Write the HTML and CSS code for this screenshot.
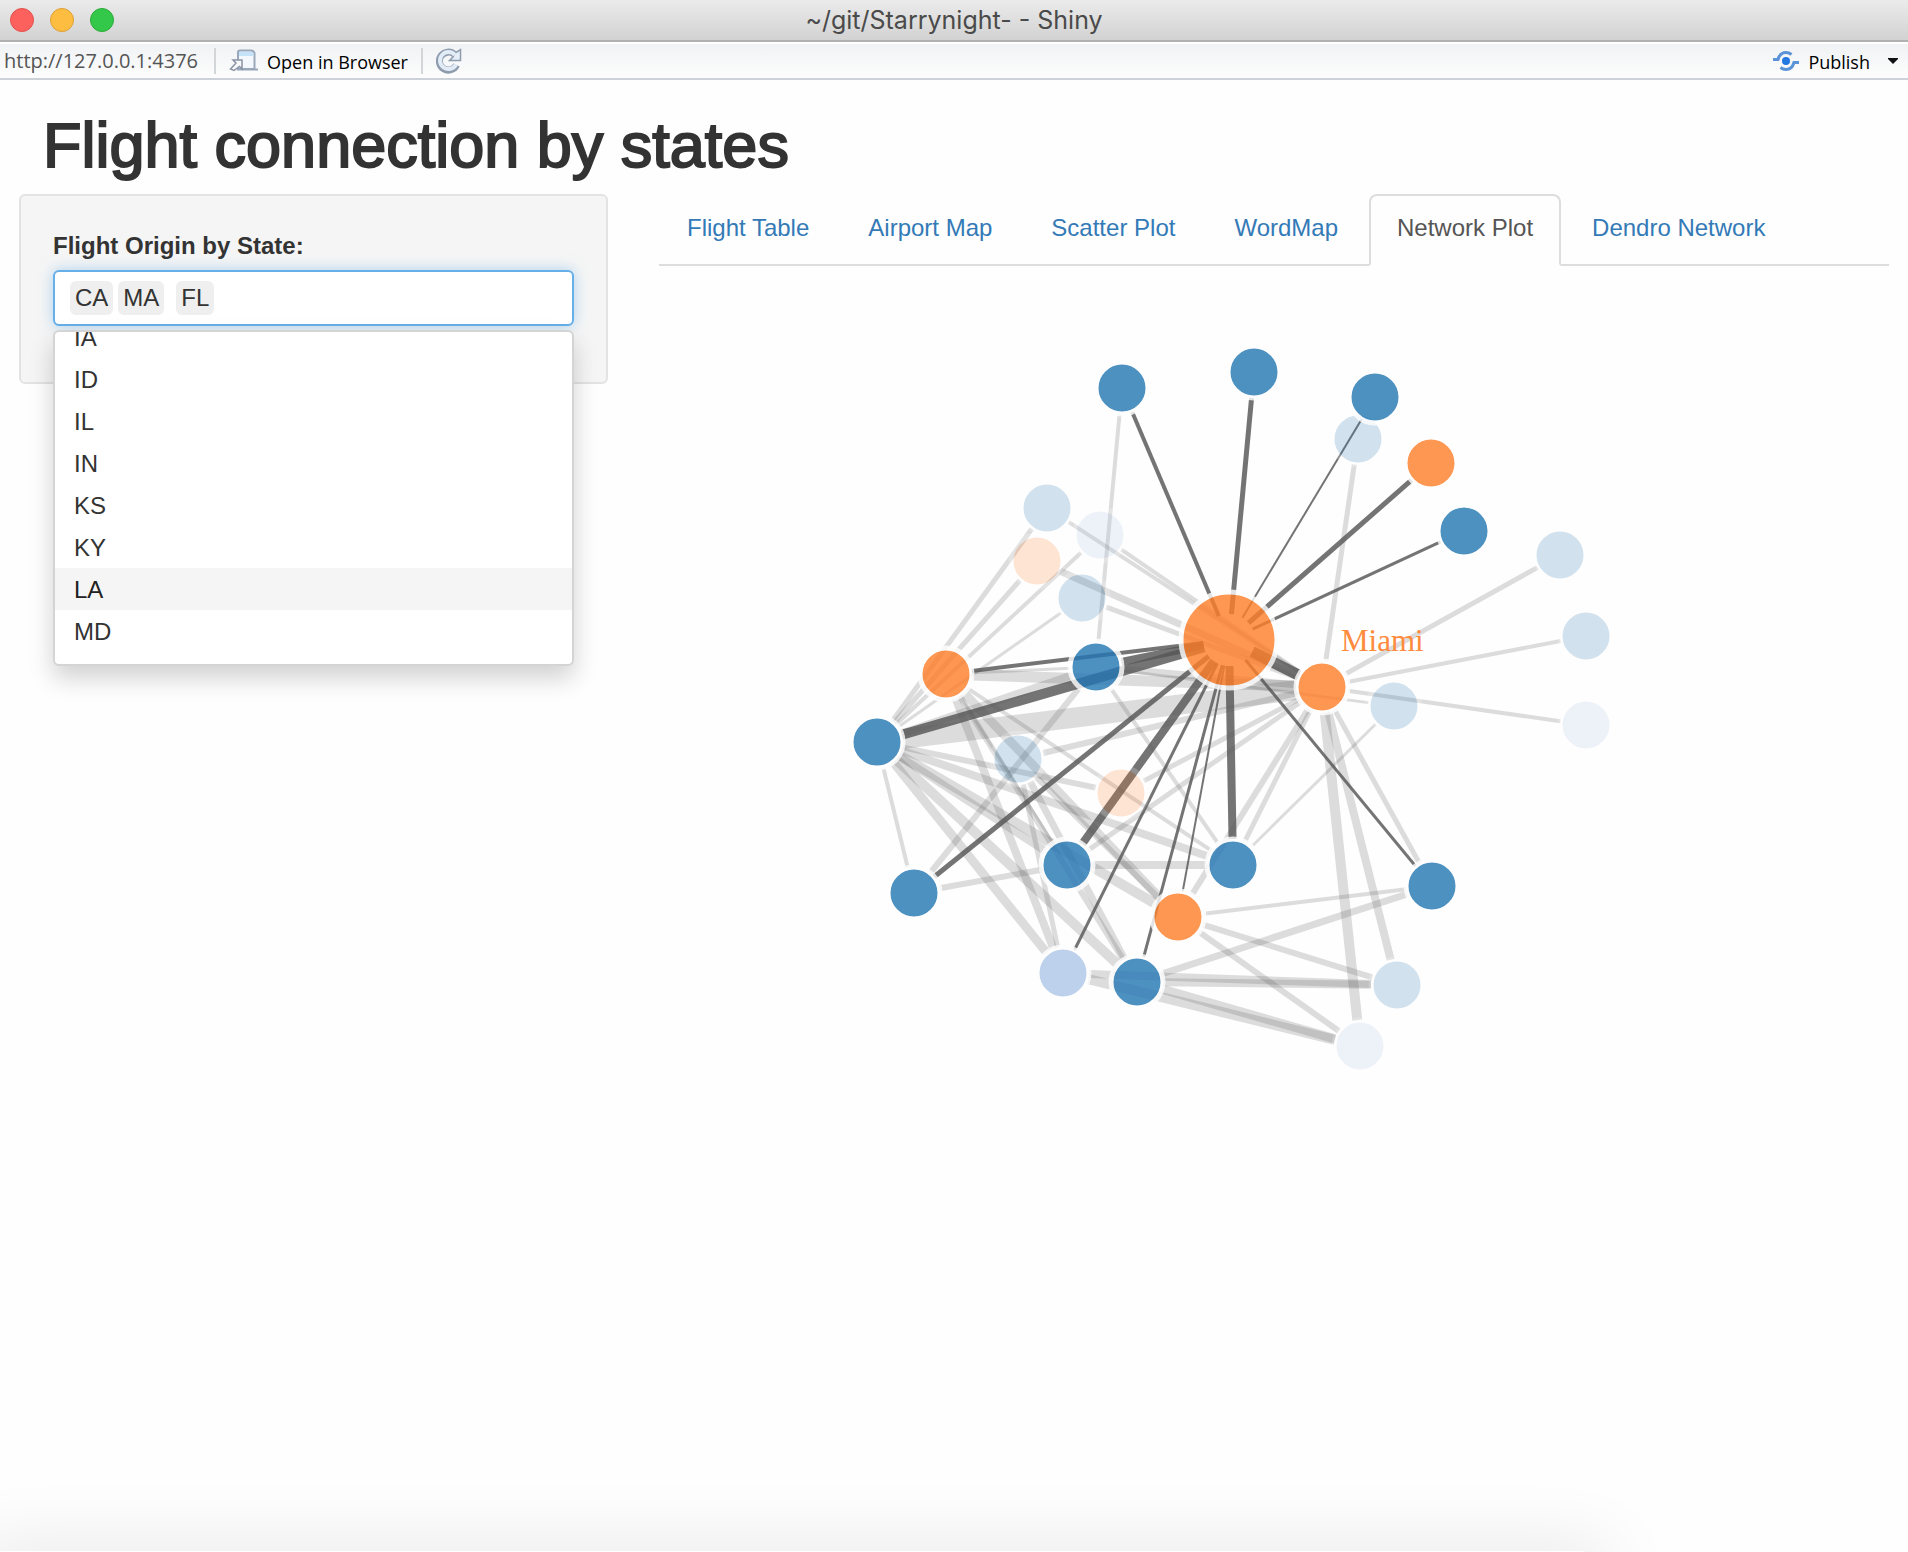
FILE: index.html
```html
<!DOCTYPE html>
<html lang="en">
<head>
<meta charset="utf-8">
<title>~/git/Starrynight- - Shiny</title>
<link rel="stylesheet" href="styles.css">
</head>
<body>
<div class="window">
  <header class="titlebar">
    <div class="lights">
      <button class="light light-close" aria-label="Close"></button>
      <button class="light light-min" aria-label="Minimize"></button>
      <button class="light light-zoom" aria-label="Zoom"></button>
    </div>
    <div class="window-title">~/git/Starrynight- - Shiny</div>
  </header>

  <nav class="toolbar" aria-label="Viewer toolbar">
    <span class="url">http://127.0.0.1:4376</span>
    <span class="divider"></span>
    <button class="tool">
      <svg class="icon-open" width="30" height="24" viewBox="0 0 30 24" aria-hidden="true">
        <path d="M9 3 Q9 1.500 11 1.500 H22 Q24.500 1.500 25.500 4 V20 H9 Z" fill="#f4f8fc" stroke="#9aa8bb" stroke-width="2"/>
        <path d="M10 3 H24 L24.500 7 H10 Z" fill="#c4e2f8"/>
        <path d="M8 20.500 H29" stroke="#9aa7b8" stroke-width="2"/>
        <path d="M1.500 20 L7 14 L4 11 H13 V20 L10.500 17.500 L5 21.500 Z" fill="#f7f8fa" stroke="#8a93a3" stroke-width="1.500"/>
      </svg>
      <span>Open in Browser</span>
    </button>
    <span class="divider"></span>
    <button class="tool" aria-label="Reload">
      <svg width="26" height="26" viewBox="0 0 26 26" aria-hidden="true">
        <path d="M20.500 17 A9 9 0 1 1 18.500 6.500" fill="none" stroke="#8f9cae" stroke-width="7"/>
        <path d="M24.500 1.500 V12.500 H13.500 L17 9 L19 5 Z" fill="#e6eff8" stroke="#8f9cae" stroke-width="1.500"/>
        <path d="M20 16.500 A8.500 8.500 0 1 1 19 7" fill="none" stroke="#e2ecf7" stroke-width="4"/>
      </svg>
    </button>
    <button class="tool tool-publish">
      <svg width="28" height="22" viewBox="0 0 28 22" aria-hidden="true">
        <circle cx="14" cy="11" r="4" fill="#2277e0"/>
        <path d="M1 9.500 H6 Q8 2.500 14 2.500 Q17 2.500 19.500 4.500" fill="none" stroke="#5b93d8" stroke-width="3"/>
        <path d="M27 12.500 H22 Q20 19.500 14 19.500 Q11 19.500 8.500 17.500" fill="none" stroke="#5b93d8" stroke-width="3"/>
      </svg>
      <span>Publish</span>
      <svg class="caret" width="10" height="6" viewBox="0 0 10 6" aria-hidden="true"><path d="M0 0 H10 V1 L5 6 L0 1 Z" fill="#111"/></svg>
    </button>
  </nav>

  <main class="app">
    <h1>Flight connection by states</h1>
    <div class="columns">
      <form class="well">
        <label for="origin">Flight Origin by State:</label>
        <div class="picker">
          <div class="field">
            <span class="chip">CA</span>
            <span class="chip">MA</span>
            <span class="chip chip-last">FL</span>
            <input id="origin" type="text" autocomplete="off">
          </div>
          <div class="menu">
            <ul class="options" role="listbox" aria-label="States">
              <li role="option">IA</li>
              <li role="option">ID</li>
              <li role="option">IL</li>
              <li role="option">IN</li>
              <li role="option">KS</li>
              <li role="option">KY</li>
              <li role="option" class="active" aria-selected="true">LA</li>
              <li role="option">MD</li>
              <li role="option">ME</li>
            </ul>
          </div>
        </div>
      </form>

      <section class="results">
        <ul class="tabs">
          <li><a href="#table">Flight Table</a></li>
          <li><a href="#airports">Airport Map</a></li>
          <li><a href="#scatter">Scatter Plot</a></li>
          <li><a href="#wordmap">WordMap</a></li>
          <li><a href="#network" class="current" aria-current="page">Network Plot</a></li>
          <li><a href="#dendro">Dendro Network</a></li>
        </ul>
        <svg id="network" class="network" viewBox="659 266 1230 1000" role="img" aria-label="Network of airports connected to Miami">
          <g id="links"></g>
          <g id="nodes"></g>
          <text class="node-label" x="1341" y="651">Miami</text>
        </svg>
      </section>
    </div>
  </main>
  <div class="edge-shade"></div>
</div>
<script src="script.js"></script>
</body>
</html>
```
FILE: styles.css
```css
* { box-sizing: border-box; }

body {
  margin: 0;
  background: #fefefe;
  color: #333;
  font: 24px/34px "Liberation Sans", Arial, sans-serif;
}

button {
  border: 0;
  padding: 0;
  background: none;
  font: inherit;
  color: inherit;
}

ul { list-style: none; margin: 0; padding: 0; }

.window {
  display: flex;
  flex-direction: column;
  min-height: 100vh;
  overflow: hidden;
}

/* Window frame */
.titlebar {
  display: grid;
  grid-template-columns: 1fr auto 1fr;
  align-items: center;
  height: 42px;
  padding: 0 10px;
  background: linear-gradient(#ebebeb, #d2d2d2);
  border-bottom: 2px solid #b1b1b1;
}
.lights { display: flex; gap: 16px; }
.light { width: 24px; height: 24px; border-radius: 50%; border: 1px solid; }
.light-close { background: #fc615d; border-color: #e2504c; }
.light-min { background: #fdbd41; border-color: #dd9f35; }
.light-zoom { background: #34c84a; border-color: #2aab38; }
.window-title { font: 25px/38px Inter, sans-serif; color: #4a4a4a; }

.toolbar {
  display: flex;
  align-items: center;
  height: 38px;
  padding: 0 10px 0 4px;
  background: linear-gradient(#f0f2f4, #fdfdfd);
  border-top: 2px solid #fff;
  border-bottom: 2px solid #ccd2d8;
  font: 18px/28px "Open Sans", sans-serif;
  color: #000;
}
.url { font-size: 20px; color: #555; }
.divider {
  width: 2px;
  height: 26px;
  margin: 0 13px;
  background: #d3d6d9;
}
.tool { display: flex; align-items: center; gap: 8px; }
.tool span { padding-top: 2px; font-weight: 500; }
.url + .divider { margin-left: 16px; }
.tool-publish { margin-left: auto; }
.caret { margin-left: 10px; }

/* Application */
.app { padding: 0 19px; }
h1 {
  margin: 31px 0 15px;
  padding-left: 24px;
  font-size: 63px;
  line-height: 68px;
  font-weight: 400;
  -webkit-text-stroke: 2px #333;
}
.columns {
  display: grid;
  grid-template-columns: 589fr 1230fr;
  column-gap: 51px;
  align-items: start;
}

.well {
  height: 190px;
  padding: 33px 32px 0;
  background: #f5f5f5;
  border: 2px solid #e3e3e3;
  border-radius: 6px;
}
.well label { display: block; font-weight: 700; margin-bottom: 7px; }
.picker { position: relative; }
.field {
  display: flex;
  align-items: center;
  gap: 5px;
  height: 56px;
  padding: 0 15px;
  background: #fff;
  border: 2px solid #66afe9;
  border-radius: 6px;
  box-shadow: 0 0 14px rgba(102, 175, 233, .5);
}
.chip {
  padding: 0 5px;
  background: #efefef;
  border-radius: 6px;
}
.chip-last { margin-left: 7px; }
.field input {
  flex: 1;
  min-width: 0;
  border: 0;
  outline: 0;
  background: none;
  font: inherit;
}
.menu {
  position: absolute;
  top: 60px;
  left: 0;
  right: 0;
  z-index: 1;
  height: 336px;
  overflow: hidden;
  background: #fff;
  border: 2px solid #d4d4d4;
  border-radius: 6px;
  box-shadow: 0 12px 24px rgba(0, 0, 0, .18);
}
.options { margin-top: -16px; }
.options li { padding: 2px 19px 0; line-height: 40px; }
.options .active { background: #f5f5f5; color: #222; }

.tabs {
  display: flex;
  gap: 3px;
  border-bottom: 2px solid #ddd;
}
.tabs a {
  display: block;
  height: 72px;
  margin-bottom: -2px;
  padding: 15px 26px;
  border: 2px solid transparent;
  border-radius: 8px 8px 0 0;
  color: #337ab7;
  text-decoration: none;
  white-space: nowrap;
}
.tabs .current {
  color: #555;
  background: #fefefe;
  border-color: #ddd;
  border-bottom-color: #fefefe;
}

/* Network plot */
.network { display: block; width: 100%; height: auto; }
.link { stroke: #555; stroke-opacity: .2; }
.link-on { stroke-opacity: .82; }
.node { stroke: #fff; stroke-width: 5px; opacity: .8; }
.node-dim { opacity: .2; }
.blue { fill: #2276b3; }
.orange { fill: #ff7e27; }
.pale { fill: #aec7e8; }
.node-label { font: 31px "Liberation Serif", serif; fill: #ff8b3d; }

/* Soft shade along the lower window edge */
.edge-shade {
  width: 83%;
  height: 1px;
  margin-top: auto;
  box-shadow: 0 20px 70px 24px rgba(0, 0, 0, .1);
}
```
FILE: script.js
```js
// Airports: [x, y, colour, dimmed]
const nodes = {
  n1: [1122, 388, 'blue'],
  n2: [1254, 372, 'blue'],
  l3: [1358, 439, 'blue', true],
  n3: [1375, 397, 'blue'],
  n4: [1431, 463, 'orange'],
  n5: [1464, 531, 'blue'],
  l6: [1560, 555, 'blue', true],
  l7: [1586, 636, 'blue', true],
  l8: [1586, 725, 'pale', true],
  l9: [1394, 706, 'blue', true],
  la: [1047, 508, 'blue', true],
  lb: [1100, 535, 'pale', true],
  lc: [1037, 561, 'orange', true],
  ld: [1082, 598, 'blue', true],
  le: [1018, 759, 'blue', true],
  lf: [1121, 793, 'orange', true],
  r: [1322, 687, 'orange'],
  b: [1096, 667, 'blue'],
  o: [946, 674, 'orange'],
  a: [877, 742, 'blue'],
  c: [1067, 865, 'blue'],
  d: [1233, 865, 'blue'],
  e: [914, 893, 'blue'],
  f: [1063, 973, 'pale'],
  g: [1137, 982, 'blue'],
  h: [1178, 917, 'orange'],
  i: [1432, 886, 'blue'],
  j: [1397, 985, 'blue', true],
  k: [1360, 1046, 'pale', true],
  miami: [1229, 640, 'orange']
};

// Routes: [from, to, weight]
const links = [
  ['n1', 'b', 4], ['la', 'a', 5], ['lc', 'a', 5], ['lb', 'a', 4], ['ld', 'a', 3],
  ['b', 'a', 8], ['r', 'a', 20], ['o', 'r', 11], ['o', 'b', 3], ['b', 'r', 7], ['b', 'l9', 3],
  ['la', 'r', 4], ['lb', 'r', 4], ['lc', 'r', 7], ['ld', 'r', 5], ['le', 'r', 6],
  ['lf', 'r', 5], ['c', 'r', 5], ['h', 'r', 6], ['d', 'r', 5], ['k', 'r', 10],
  ['j', 'r', 8], ['i', 'r', 5], ['l6', 'r', 5], ['l7', 'r', 4], ['l8', 'r', 4],
  ['l3', 'r', 5], ['l9', 'd', 3], ['b', 'd', 4], ['b', 'e', 6], ['o', 'f', 8],
  ['o', 'c', 3], ['o', 'g', 6], ['o', 'h', 9], ['o', 'd', 4], ['le', 'g', 7],
  ['le', 'f', 5], ['le', 'h', 6], ['a', 'lf', 6], ['a', 'd', 8], ['a', 'c', 8],
  ['a', 'h', 10], ['a', 'g', 10], ['a', 'f', 9], ['a', 'e', 4], ['e', 'c', 6],
  ['c', 'd', 8], ['f', 'j', 8], ['f', 'k', 10], ['g', 'j', 8], ['g', 'k', 9],
  ['g', 'i', 7], ['h', 'i', 4], ['h', 'j', 6], ['h', 'k', 6],
  ['n1', 'miami', 4], ['n2', 'miami', 5], ['n3', 'miami', 2], ['n4', 'miami', 5],
  ['n5', 'miami', 3], ['r', 'miami', 11], ['o', 'miami', 4], ['a', 'miami', 10],
  ['b', 'miami', 8], ['c', 'miami', 8], ['d', 'miami', 8], ['e', 'miami', 5],
  ['f', 'miami', 3], ['g', 'miami', 3], ['h', 'miami', 2], ['i', 'miami', 3]
];

const RADIUS = 26;
const BIG_RADIUS = 48;

function add(parent, tag, attrs) {
  const el = document.createElementNS('http://www.w3.org/2000/svg', tag);
  for (const key in attrs) el.setAttribute(key, attrs[key]);
  document.getElementById(parent).appendChild(el);
}

// Each link stops at the resting radius of the nodes that it joins.
for (const [from, to, weight] of links) {
  const [x1, y1] = nodes[from];
  const [x2, y2] = nodes[to];
  const length = Math.hypot(x2 - x1, y2 - y1);
  const dx = (x2 - x1) / length * RADIUS;
  const dy = (y2 - y1) / length * RADIUS;
  add('links', 'line', {
    x1: x1 + dx, y1: y1 + dy, x2: x2 - dx, y2: y2 - dy,
    'stroke-width': weight,
    class: to === 'miami' ? 'link link-on' : 'link'
  });
}

for (const id in nodes) {
  const [cx, cy, colour, dim] = nodes[id];
  add('nodes', 'circle', {
    cx, cy,
    r: id === 'miami' ? BIG_RADIUS : RADIUS,
    class: 'node ' + colour + (dim ? ' node-dim' : '')
  });
}
```
